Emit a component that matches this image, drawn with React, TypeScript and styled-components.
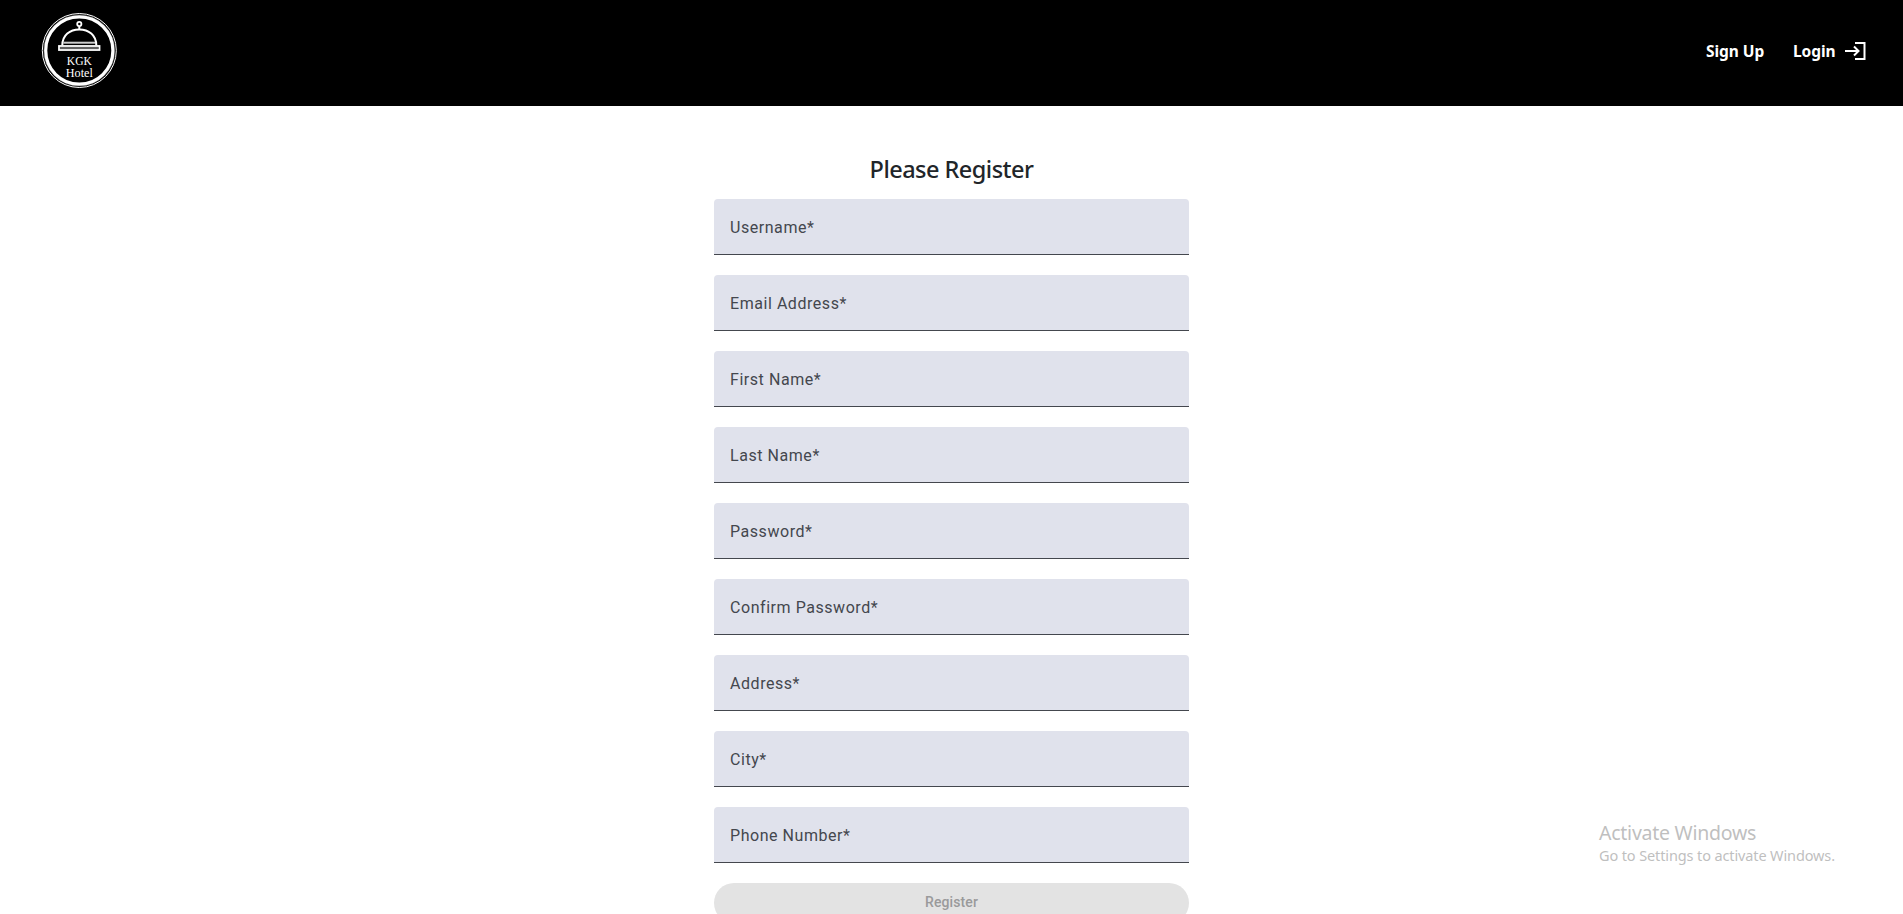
import React from "react";
import styled, { createGlobalStyle } from "styled-components";

const GlobalStyle = createGlobalStyle`
  *, *::before, *::after { box-sizing: border-box; }
  body { margin: 0; background: #fff; overflow: hidden; }
`;

const uiFont = `"Segoe UI", "Noto Sans", "Open Sans", sans-serif`;

const Page = styled.div`
  height: 100vh;
  overflow: hidden;
  font-family: ${uiFont};
  color: #212529;
`;

const Header = styled.header`
  display: flex;
  align-items: flex-start;
  justify-content: space-between;
  height: 106px;
  padding: 12px 36px 0 41px;
  background: #000;
`;

const Logo = styled.svg`
  display: block;
  width: 77px;
  height: 77px;
`;

const Nav = styled.nav`
  display: flex;
  align-items: center;
  height: 78px;
  gap: 28px;
`;

const NavLink = styled.a<{ $width: number }>`
  display: flex;
  align-items: center;
  width: ${(p) => p.$width}px;
  color: #fff;
  font-size: 15.5px;
  line-height: 24px;
  font-weight: 700;
  letter-spacing: -0.05px;
  white-space: nowrap;
  text-decoration: none;
`;

const LoginIcon = styled.svg`
  width: 24px;
  height: 24px;
  margin-left: auto;
`;

const Form = styled.form`
  display: flex;
  flex-direction: column;
  width: 475px;
  margin: 49px auto 0;
`;

const Title = styled.h4`
  margin: 0 0 15px;
  font-size: 23.5px;
  font-weight: 500;
  line-height: 29px;
  letter-spacing: -0.53px;
  text-align: center;
  white-space: nowrap;
`;

const Field = styled.label`
  display: flex;
  align-items: center;
  height: 56px;
  margin-bottom: 20px;
  padding: 2px 16px 0;
  border-bottom: 1px solid #44474e;
  border-radius: 4px 4px 0 0;
  background: #e0e2ec;
  color: #44474e;
  font: 400 16px/24px Roboto, sans-serif;
  letter-spacing: 0.55px;
`;

const Submit = styled.button`
  flex: none;
  height: 40px;
  padding: 0 0 2px;
  border: 0;
  border-radius: 20px;
  background: #e3e3e3;
  color: #9a9a9b;
  font: 500 14px/20px Roboto, sans-serif;
  letter-spacing: 0.1px;
`;

const Watermark = styled.aside`
  position: absolute;
  left: 1599px;
  top: 819px;
  color: #bfbfbf;
  white-space: nowrap;
`;

const WatermarkTitle = styled.div`
  font-size: 19.5px;
  line-height: 28px;
  letter-spacing: -0.25px;
`;

const WatermarkText = styled.div`
  margin-top: -1px;
  font-size: 14.5px;
  line-height: 18px;
  letter-spacing: -0.12px;
`;

const fields = [
  "Username",
  "Email Address",
  "First Name",
  "Last Name",
  "Password",
  "Confirm Password",
  "Address",
  "City",
  "Phone Number",
];

const HotelLogo = () => (
  <Logo viewBox="0 0 77 77" fill="none" stroke="#fff">
    <circle cx="38.3" cy="38.5" r="37" strokeWidth="1" />
    <circle cx="38.3" cy="38.5" r="35.4" strokeWidth="0.8" opacity="0.4" />
    <circle cx="38.3" cy="38.5" r="33.6" strokeWidth="3.2" />
    <circle cx="38.3" cy="12" r="2.1" strokeWidth="1.8" />
    <path d="M38.3 14.2V17" strokeWidth="2" />
    <path d="M21.3 33.5C21.3 23 29 17.500 38.300 17.500S55.300 23 55.300 33.500" strokeWidth="2" />
    <path d="M22.500 30.700H54" strokeWidth="2" opacity="0.8" />
    <rect x="18" y="34" width="40.500" height="4" strokeWidth="1.800" />
    <path d="M19 36H57.500" strokeWidth="1.500" opacity="0.5" />
    <g fill="#fff" stroke="none" fontFamily='"Liberation Serif", serif' textAnchor="middle">
      <text x="38.3" y="53" fontSize="12" textLength="25" lengthAdjust="spacingAndGlyphs">KGK</text>
      <text x="38.3" y="65.2" fontSize="12.5" textLength="27" lengthAdjust="spacingAndGlyphs">Hotel</text>
    </g>
  </Logo>
);

export default function App() {
  return (
    <Page>
      <GlobalStyle />
      <Header>
        <HotelLogo />
        <Nav>
          <NavLink $width={59}>Sign Up</NavLink>
          <NavLink $width={74}>
            Login
            <LoginIcon viewBox="0 0 24 24" fill="none" stroke="#fff" strokeWidth="2">
              <path d="M12 4H21.500V20H12M2 12H15M11 7.500L15.500 12L11 16.500" />
            </LoginIcon>
          </NavLink>
        </Nav>
      </Header>
      <Form>
        <Title>Please Register</Title>
        {fields.map((name) => (
          <Field key={name}>{name}*</Field>
        ))}
        <Submit type="button" disabled>Register</Submit>
      </Form>
      <Watermark>
        <WatermarkTitle>Activate Windows</WatermarkTitle>
        <WatermarkText>Go to Settings to activate Windows.</WatermarkText>
      </Watermark>
    </Page>
  );
}
